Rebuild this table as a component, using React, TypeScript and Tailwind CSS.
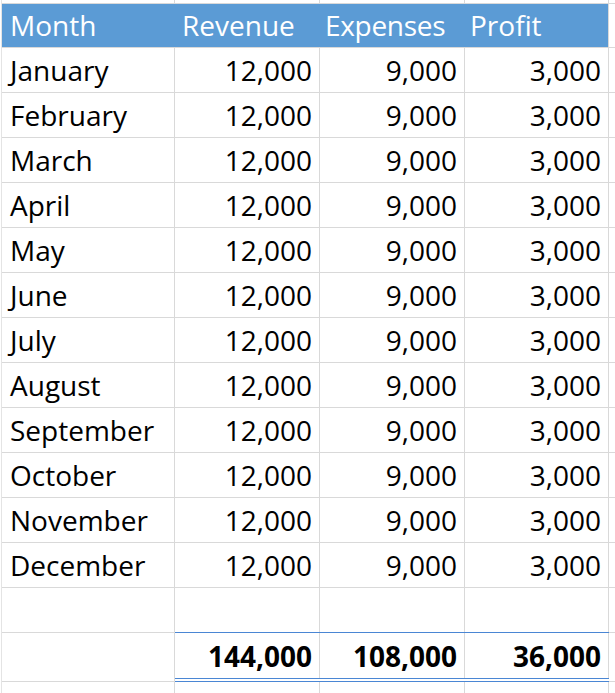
import React from "react";

const MONTHS = [
  "January",
  "February",
  "March",
  "April",
  "May",
  "June",
  "July",
  "August",
  "September",
  "October",
  "November",
  "December",
];

const COLS = ["w-[173px]", "w-[145px]", "w-[145px]", "w-[144px]"];

function Cell({
  col,
  children,
  right = false,
  className = "",
}: {
  col: number;
  children?: React.ReactNode;
  right?: boolean;
  className?: string;
}) {
  return (
    <div
      className={`${COLS[col]} shrink-0 flex items-center border-r border-[#d9d9d9] ${
        right ? "justify-end pr-[7px]" : "pl-[8px]"
      } ${className}`}
    >
      {children}
    </div>
  );
}

// trailing sliver of column E
function Tail({ className = "" }: { className?: string }) {
  return <div className={`w-[7px] shrink-0 ${className}`} />;
}

export default function App() {
  return (
    <div
      className="h-[693px] w-[615px] overflow-hidden bg-white pl-[1px] text-[28px] leading-none text-black"
      style={{ fontFamily: '"Open Sans", "Noto Sans", sans-serif' }}
    >
      <div className="border-l border-[#e4e4e4]">
        {/* bottom edge of the row above */}
        <div className="flex h-[4px] border-b border-[#d9d9d9]">
          {COLS.map((_, i) => (
            <Cell key={i} col={i} />
          ))}
          <Tail />
        </div>

        {/* header */}
        <div className="flex h-[44px] border-b border-[#d9d9d9]">
          <div className="flex w-[606px] shrink-0 bg-[#5b9bd5] text-white">
            <div className="w-[173px] shrink-0 pl-[8px] pt-[7px]">Month</div>
            <div className="w-[145px] shrink-0 pl-[7px] pt-[7px]">Revenue</div>
            <div className="w-[145px] shrink-0 pl-[5px] pt-[7px] tracking-[-0.3px]">Expenses</div>
            <div className="w-[143px] shrink-0 pl-[5px] pt-[7px]">Profit</div>
          </div>
          <div className="w-px shrink-0 bg-[#d9d9d9]" />
          <Tail />
        </div>

        {MONTHS.map((m) => (
          <div key={m} className="flex h-[45px] border-b border-[#d9d9d9]">
            <Cell col={0}>{m}</Cell>
            <Cell col={1} right>
              12,000
            </Cell>
            <Cell col={2} right>
              9,000
            </Cell>
            <Cell col={3} right>
              3,000
            </Cell>
            <Tail />
          </div>
        ))}

        {/* empty row */}
        <div className="flex h-[45px] border-b border-[#d9d9d9]">
          {COLS.map((_, i) => (
            <Cell key={i} col={i} />
          ))}
          <Tail />
        </div>

        {/* totals */}
        <div className="-mt-px flex h-[50px] font-bold">
          <Cell col={0} className="mt-px border-b border-[#d9d9d9]" />
          <div className="flex border-t border-b-4 border-double border-[#4a86d4]">
            <Cell col={1} right>
              144,000
            </Cell>
            <Cell col={2} right>
              108,000
            </Cell>
            <Cell col={3} right>
              36,000
            </Cell>
          </div>
          <Tail className="mt-px border-b border-[#d9d9d9]" />
        </div>

        {/* top of the next row */}
        <div className="flex h-[20px]">
          {COLS.map((_, i) => (
            <Cell key={i} col={i} />
          ))}
          <Tail />
        </div>
      </div>
    </div>
  );
}
